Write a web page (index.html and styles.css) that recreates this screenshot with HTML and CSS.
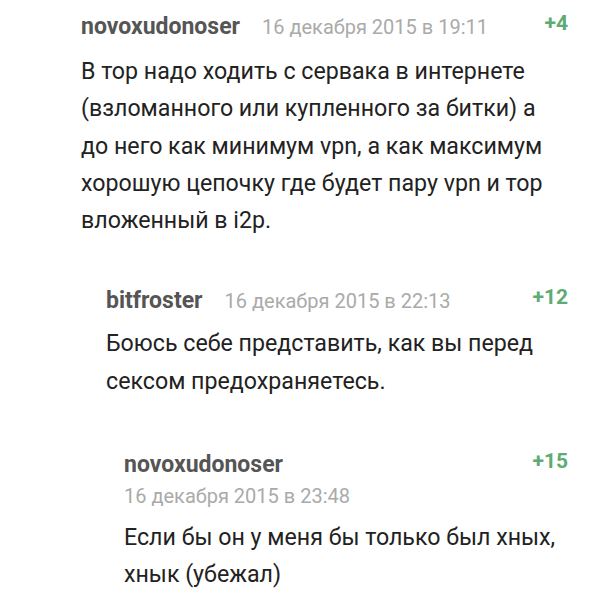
FILE: index.html
```html
<!DOCTYPE html>
<html lang="ru">
<head>
    <meta charset="UTF-8">
    <meta name="viewport" content="width=device-width, initial-scale=1.0">
    <title>Комментарии</title>
    <link rel="stylesheet" href="styles.css">
</head>
<body>
    <div class="thread">
        <div class="comment">
            <div class="comment-head">
                <div class="meta">
                    <span class="user">novoxudonoser</span>
                    <span class="date">16 декабря 2015 в 19:11</span>
                </div>
                <span class="score">+4</span>
            </div>
            <div class="comment-text">В тор надо ходить с сервака в интернете (взломанного или купленного за битки) а до него как минимум vpn, а как максимум хорошую цепочку где будет пару vpn и тор вложенный в i2p.</div>

            <div class="replies">
                <div class="comment">
                    <div class="comment-head">
                        <div class="meta">
                            <span class="user">bitfroster</span>
                            <span class="date">16 декабря 2015 в 22:13</span>
                        </div>
                        <span class="score">+12</span>
                    </div>
                    <div class="comment-text">Боюсь себе представить, как вы перед сексом предохраняетесь.</div>

                    <div class="replies">
                        <div class="comment">
                            <div class="comment-head">
                                <div class="meta stacked">
                                    <span class="user">novoxudonoser</span>
                                    <span class="date">16 декабря 2015 в 23:48</span>
                                </div>
                                <span class="score">+15</span>
                            </div>
                            <div class="comment-text">Если бы он у меня бы только был хных, хнык (убежал)</div>
                        </div>
                    </div>
                </div>
            </div>
        </div>
    </div>
</body>
</html>
```

FILE: styles.css
```css
body {
    margin: 0;
    background-color: #fff;
    font-family: Roboto, "Noto Sans", sans-serif;
    color: #222;
}
.thread {
    padding: 12px 27px 0 81px;
}
.comment-head {
    display: flex;
    align-items: flex-start;
}
.meta {
    display: flex;
    align-items: baseline;
    gap: 22px;
}
.meta.stacked {
    flex-direction: column;
    gap: 1px;
}
.user {
    font-size: 23px;
    line-height: 30px;
    font-weight: bold;
    color: #555;
}
.date {
    font-size: 20px;
    line-height: 30px;
    color: #aaa;
}
.score {
    margin-left: auto;
    font-size: 21px;
    line-height: 22px;
    font-weight: bold;
    color: #5fab74;
}
.comment-text {
    margin: 11px 10px 0 0;
    font-size: 23.2px;
    line-height: 37.3px;
    color: #222;
}
.replies {
    margin-top: 47px;
    padding-left: 25px;
}
.replies .replies {
    margin-top: 50px;
    padding-left: 18px;
}
.replies .comment-text {
    margin-top: 9px;
}
.replies .replies .comment-text {
    margin-top: 8px;
}
```
